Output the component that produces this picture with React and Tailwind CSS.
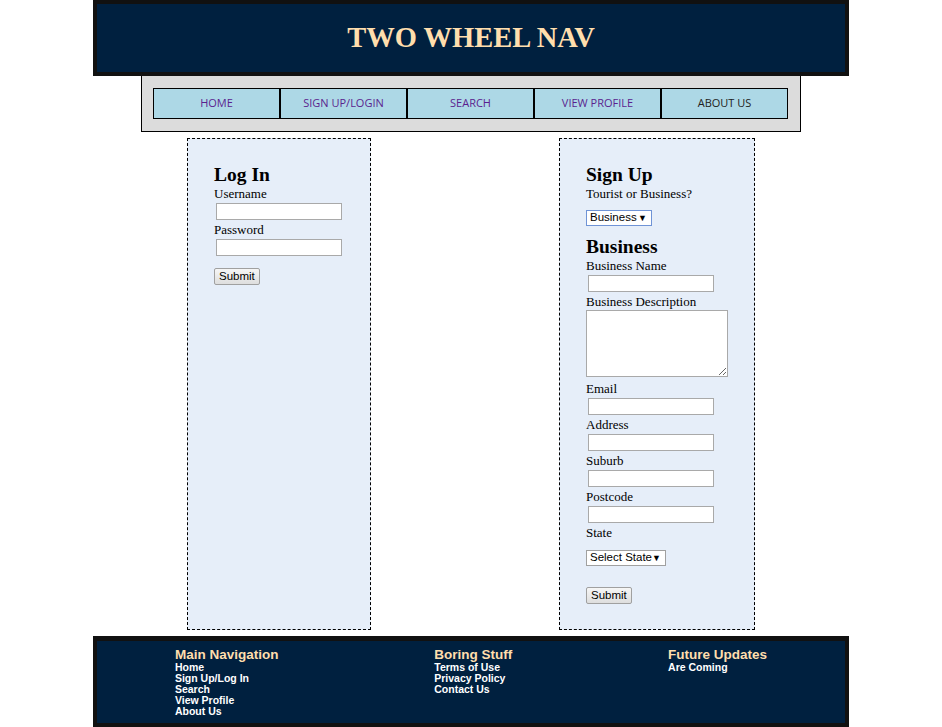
import React from "react";

const navItems = [
  { label: "HOME", color: "text-[#5b1f8f]" },
  { label: "SIGN UP/LOGIN", color: "text-[#5b1f8f]" },
  { label: "SEARCH", color: "text-[#5b1f8f]" },
  { label: "VIEW PROFILE", color: "text-[#5b1f8f]" },
  { label: "ABOUT US", color: "text-[#222]" },
];

const footerCols = [
  {
    title: "Main Navigation",
    links: ["Home", "Sign Up/Log In", "Search", "View Profile", "About Us"],
  },
  { title: "Boring Stuff", links: ["Terms of Use", "Privacy Policy", "Contact Us"] },
  { title: "Future Updates", links: ["Are Coming"] },
];

const serif = "font-['Liberation_Serif','Times_New_Roman',serif]";
const sans = "font-['Liberation_Sans',Arial,sans-serif]";

function Label({ children }) {
  return <div className="h-[15px] text-[13px] leading-[15px] text-black">{children}</div>;
}

function TextInput() {
  return (
    <input
      type="text"
      className="my-[2px] ml-[2px] block h-[17px] w-[126px] border border-[#a9a9a9] bg-white outline-none"
    />
  );
}

function FakeSelect({ label, focused, width }) {
  return (
    <div
      className={`flex h-[16px] items-center justify-between whitespace-nowrap border bg-white pl-[3px] pr-[4px] text-[11.5px] leading-none text-black ${sans} ${
        focused ? "border-[#6f93d6]" : "border-[#a0a0a0]"
      } ${width}`}
    >
      <span>{label}</span>
      <span className="text-[9px]">▼</span>
    </div>
  );
}

function SubmitButton() {
  return (
    <button
      type="button"
      className={`flex h-[17px] items-center rounded-[2px] border border-[#a0a0a0] bg-gradient-to-b from-[#f6f6f6] to-[#dedede] px-[4px] text-[11.5px] leading-none text-black ${sans}`}
    >
      Submit
    </button>
  );
}

function Heading({ children }) {
  return <h2 className="h-[22px] text-[19.5px] font-bold leading-[22px] text-black">{children}</h2>;
}

export default function App() {
  return (
    <div className={`min-h-[727px] bg-white ${serif}`}>
      <header className="mx-auto flex h-[76px] w-[756px] items-center justify-center border-4 border-[#111] bg-[#00203f]">
        <h1 className="text-[28.5px] font-bold leading-none text-[#ffdead]">TWO WHEEL NAV</h1>
      </header>

      <nav className="mx-auto w-[660px] border border-t-0 border-black bg-[#dcdcdc] px-[11px] py-[12px]">
        <ul className="flex">
          {navItems.map((item) => (
            <li
              key={item.label}
              className={`flex h-[31px] w-[127px] items-center justify-center border border-black bg-[#add8e6] text-[11px] font-['Open_Sans',sans-serif] ${item.color}`}
            >
              {item.label}
            </li>
          ))}
        </ul>
      </nav>

      <main className="mx-auto flex w-[756px] justify-between px-[94px] py-[6px]">
        <section className="h-[492px] w-[184px] border border-dashed border-black bg-[#e6eef9] pl-[26px] pt-[25px]">
          <Heading>Log In</Heading>
          <Label>Username</Label>
          <TextInput />
          <Label>Password</Label>
          <TextInput />
          <div className="mt-[12px]">
            <SubmitButton />
          </div>
        </section>

        <section className="h-[492px] w-[196px] border border-dashed border-black bg-[#e6eef9] pl-[26px] pt-[25px]">
          <Heading>Sign Up</Heading>
          <Label>Tourist or Business?</Label>
          <div className="mt-[9px] mb-[10px]">
            <FakeSelect label="Business" focused width="w-[66px]" />
          </div>
          <Heading>Business</Heading>
          <Label>Business Name</Label>
          <TextInput />
          <Label>Business Description</Label>
          <textarea className="mt-[1px] mb-[4px] block h-[67px] w-[142px] resize border border-[#a9a9a9] bg-white outline-none" />
          <Label>Email</Label>
          <TextInput />
          <Label>Address</Label>
          <TextInput />
          <Label>Suburb</Label>
          <TextInput />
          <Label>Postcode</Label>
          <TextInput />
          <Label>State</Label>
          <div className="mt-[10px] mb-[21px]">
            <FakeSelect label="Select State" width="w-[80px]" />
          </div>
          <SubmitButton />
        </section>
      </main>

      <footer className="mx-auto flex h-[91px] w-[756px] justify-around border-4 border-t-[5px] border-[#111] bg-[#00203f] pt-[6px]">
        {footerCols.map((col) => (
          <div key={col.title} className={sans}>
            <div className="text-[13.5px] font-bold leading-[15px] text-[#ffdead]">{col.title}</div>
            {col.links.map((l) => (
              <div key={l} className="text-[10.5px] font-bold leading-[11px] text-white">
                {l}
              </div>
            ))}
          </div>
        ))}
      </footer>
    </div>
  );
}
